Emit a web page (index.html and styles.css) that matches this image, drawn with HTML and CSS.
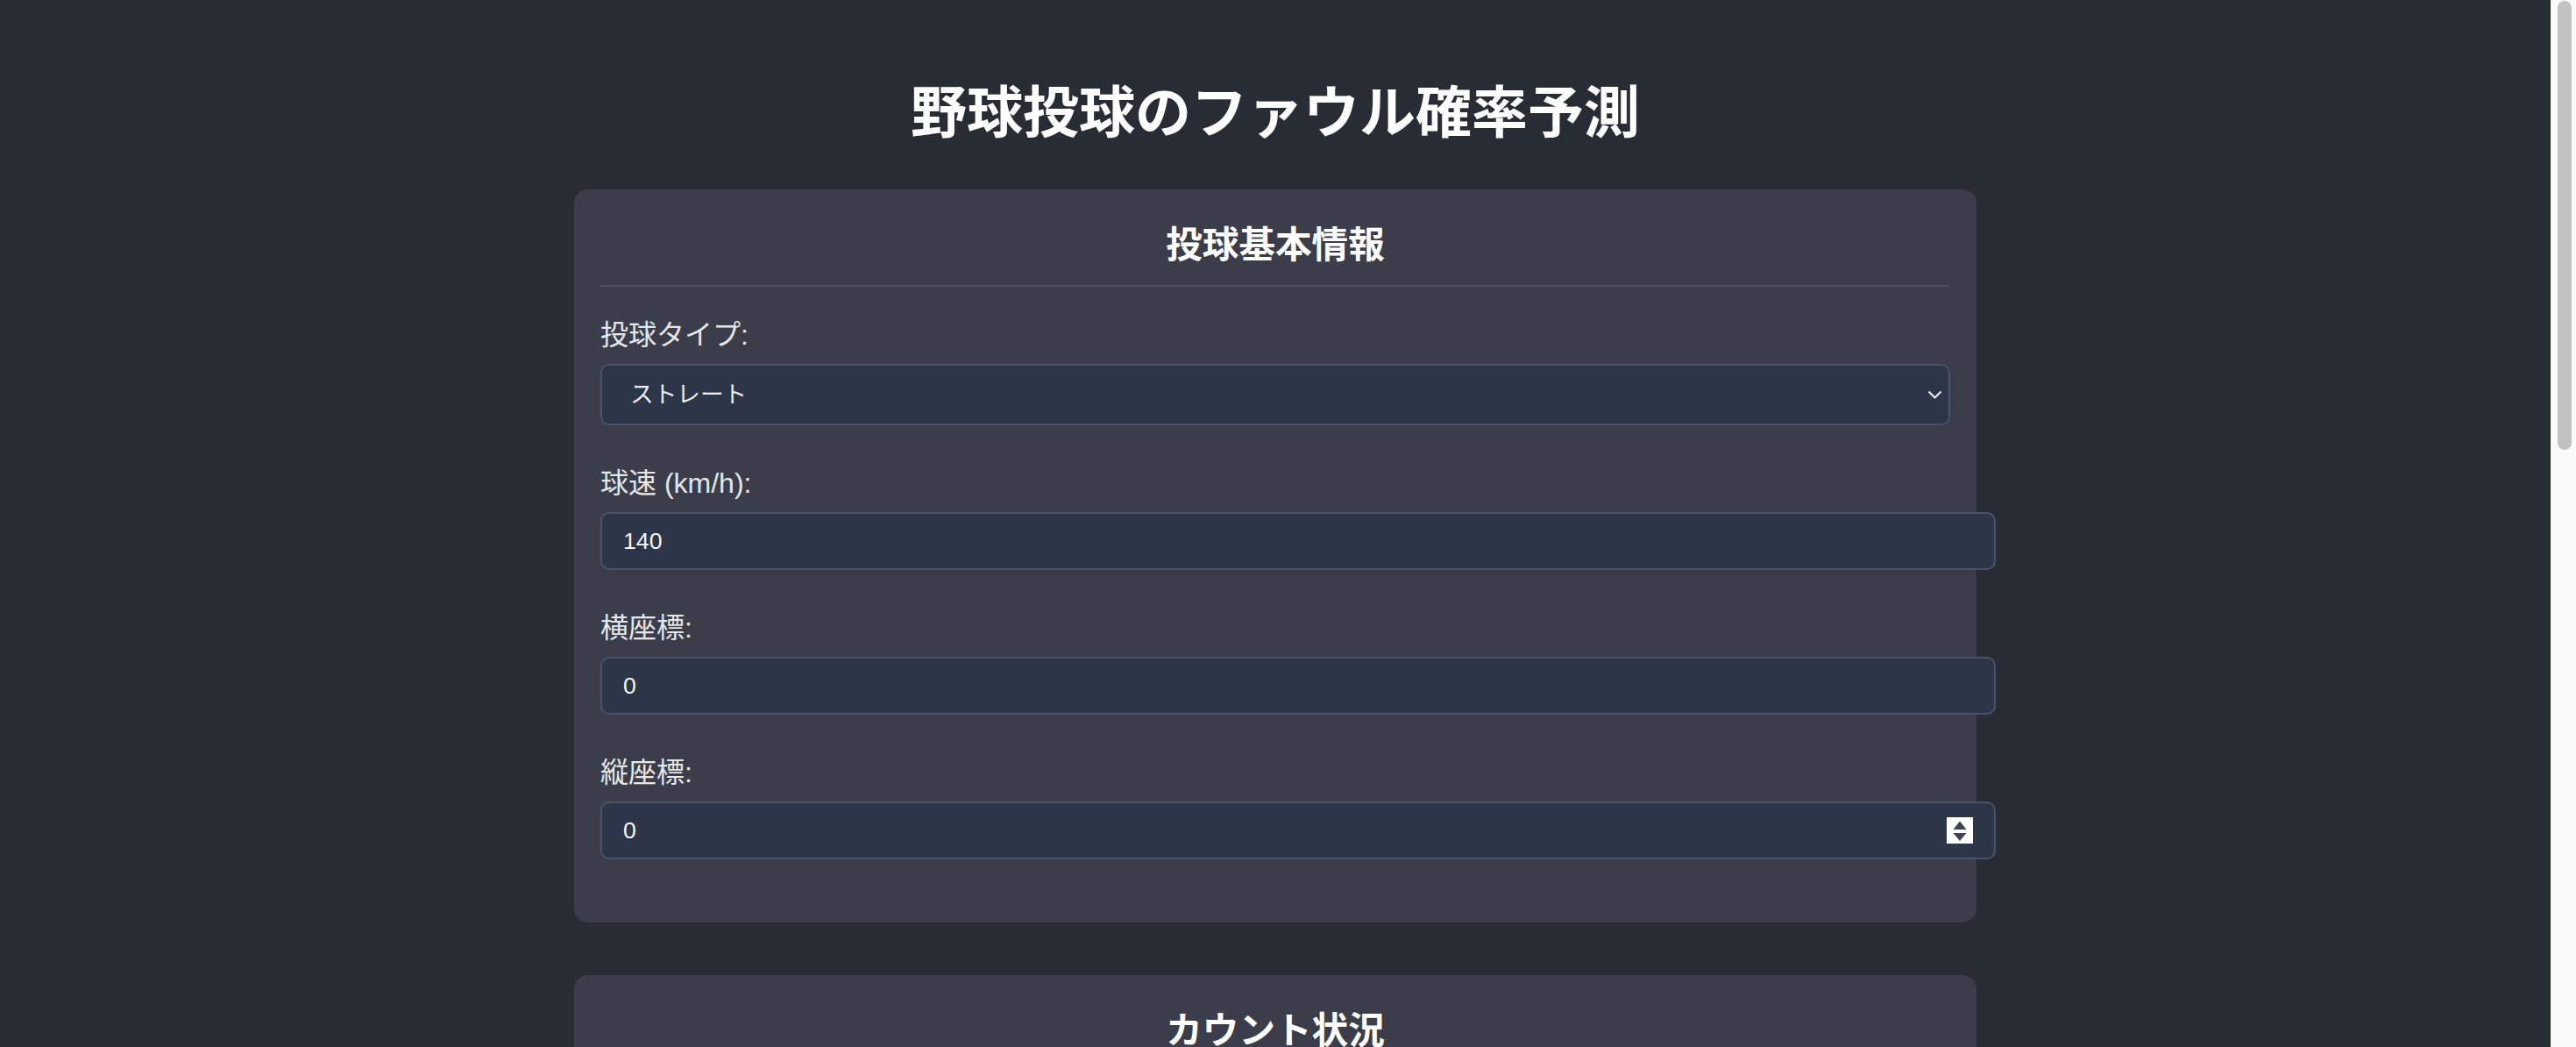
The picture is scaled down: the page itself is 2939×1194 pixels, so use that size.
FILE: index.html
```html
<!DOCTYPE html>
<html lang="ja">
<head>
<meta charset="utf-8">
<title>野球投球のファウル確率予測</title>
<link rel="stylesheet" href="styles.css">
</head>
<body>
<div class="page">
  <h1 class="title">野球投球のファウル確率予測</h1>

  <section class="card">
    <h2 class="card-title">投球基本情報</h2>
    <div class="field">
      <label class="field-label" for="pitch-type">投球タイプ:</label>
      <div class="select-wrap">
        <select id="pitch-type" class="select">
          <option>ストレート</option>
          <option>カーブ</option>
          <option>スライダー</option>
          <option>フォーク</option>
          <option>チェンジアップ</option>
        </select>
        <svg class="select-arrow" width="17" height="10" viewBox="0 0 17 10" aria-hidden="true"><path d="M1.5 1.5 L8.5 8.5 L15.5 1.5" fill="none" stroke="#f2f2f2" stroke-width="2"/></svg>
      </div>
    </div>
    <div class="field">
      <label class="field-label" for="speed">球速 (km/h):</label>
      <div class="input-wrap">
        <input id="speed" class="input" type="number" value="140">
      </div>
    </div>
    <div class="field">
      <label class="field-label" for="pos-x">横座標:</label>
      <div class="input-wrap">
        <input id="pos-x" class="input" type="number" value="0">
      </div>
    </div>
    <div class="field">
      <label class="field-label" for="pos-y">縦座標:</label>
      <div class="input-wrap">
        <input id="pos-y" class="input" type="number" value="0">
        <svg class="spinner" width="30" height="30" viewBox="0 0 30 30" aria-hidden="true">
          <rect x="0" y="0" width="30" height="30" fill="#ffffff"/>
          <polygon points="7.5,14 22.5,14 15,4.5" fill="#3e4350"/>
          <polygon points="7.5,18 22.5,18 15,27" fill="#3e4350"/>
        </svg>
      </div>
    </div>
  </section>

  <section class="card">
    <h2 class="card-title">カウント状況</h2>
    <div class="field">
      <label class="field-label" for="balls">ボール:</label>
      <div class="input-wrap">
        <input id="balls" class="input" type="number" value="0">
      </div>
    </div>
    <div class="field">
      <label class="field-label" for="strikes">ストライク:</label>
      <div class="input-wrap">
        <input id="strikes" class="input" type="number" value="0">
      </div>
    </div>
    <div class="field">
      <label class="field-label" for="outs">アウト:</label>
      <div class="input-wrap">
        <input id="outs" class="input" type="number" value="0">
      </div>
    </div>
  </section>

  <section class="card">
    <h2 class="card-title">打者情報</h2>
    <div class="field">
      <label class="field-label" for="batter-hand">打席:</label>
      <div class="input-wrap">
        <input id="batter-hand" class="input" type="text" value="右">
      </div>
    </div>
    <div class="field">
      <label class="field-label" for="avg">打率:</label>
      <div class="input-wrap">
        <input id="avg" class="input" type="number" value="0.250">
      </div>
    </div>
    <div class="field">
      <label class="field-label" for="inning">イニング:</label>
      <div class="input-wrap">
        <input id="inning" class="input" type="number" value="1">
      </div>
    </div>
  </section>

  <div class="actions">
    <button class="predict-btn" type="button">ファウル確率を予測</button>
  </div>
</div>
<div class="scrollbar" aria-hidden="true"><div class="scrollbar-thumb"></div></div>
</body>
</html>
```
FILE: styles.css
```css
html {
  background: #282c35;
}
body {
  margin: 0 29px 0 0;
  background: #282c35;
  color: #f0f0f0;
  font-family: "Liberation Sans", "Noto Sans CJK JP", sans-serif;
}
.scrollbar {
  position: fixed;
  top: 0;
  right: 0;
  width: 29px;
  height: 100vh;
  box-sizing: border-box;
  background: #fafafa;
  border-left: 1px solid #efefef;
}
.scrollbar-thumb {
  position: absolute;
  top: 1px;
  left: 7px;
  width: 16px;
  height: 512px;
  background: #c1c1c1;
  border-radius: 8px;
}
.page {
  padding: 77px 0 107px;
}
.title {
  margin: 0 0 47px;
  text-align: center;
  font-family: "Noto Sans CJK JP", sans-serif;
  font-size: 64px;
  font-weight: 700;
  color: #ffffff;
}
.card {
  box-sizing: border-box;
  width: 1600px;
  margin: 0 auto 60px;
  padding: 30px;
  background: #3b3e4a;
  border-radius: 16px;
}
.card-title {
  margin: 0 0 31px;
  padding-bottom: 19px;
  border-bottom: 2px solid #4b5263;
  text-align: center;
  font-family: "Noto Sans CJK JP", sans-serif;
  font-size: 41.6px;
  font-weight: 700;
  color: #ffffff;
}
.field {
  margin-bottom: 42px;
}
.field-label {
  display: block;
  margin-bottom: 9px;
  font-size: 32px;
  line-height: 48px;
  color: #e6e6e6;
}
.select-wrap,
.input-wrap {
  position: relative;
}
.select {
  display: block;
  box-sizing: border-box;
  width: 100%;
  height: 70px;
  padding: 0 40px 0 32px;
  -webkit-appearance: none;
  appearance: none;
  background: #2d3548;
  color: #ececec;
  border: 2px solid #4a5265;
  border-radius: 10px;
  font-family: "Liberation Sans", "Noto Sans CJK JP", sans-serif;
  font-size: 26.67px;
  outline: none;
}
.select-arrow {
  position: absolute;
  right: 9px;
  top: 30px;
  pointer-events: none;
}
.input {
  display: block;
  box-sizing: content-box;
  width: 100%;
  height: 62px;
  padding: 0 24px;
  background: #2d3548;
  color: #f5f5f5;
  border: 2px solid #4a5265;
  border-radius: 10px;
  font-family: "Liberation Sans", "Noto Sans CJK JP", sans-serif;
  font-size: 26.67px;
  outline: none;
  -moz-appearance: textfield;
}
.input::-webkit-inner-spin-button,
.input::-webkit-outer-spin-button {
  -webkit-appearance: none;
  margin: 0;
}
.spinner {
  position: absolute;
  right: -26px;
  top: 18px;
  pointer-events: none;
}
.actions {
  width: 1600px;
  margin: 0 auto;
}
.predict-btn {
  display: block;
  width: 100%;
  height: 84px;
  background: #4a7bd0;
  color: #ffffff;
  border: none;
  border-radius: 10px;
  font-family: "Noto Sans CJK JP", sans-serif;
  font-size: 32px;
  font-weight: 700;
}
```
